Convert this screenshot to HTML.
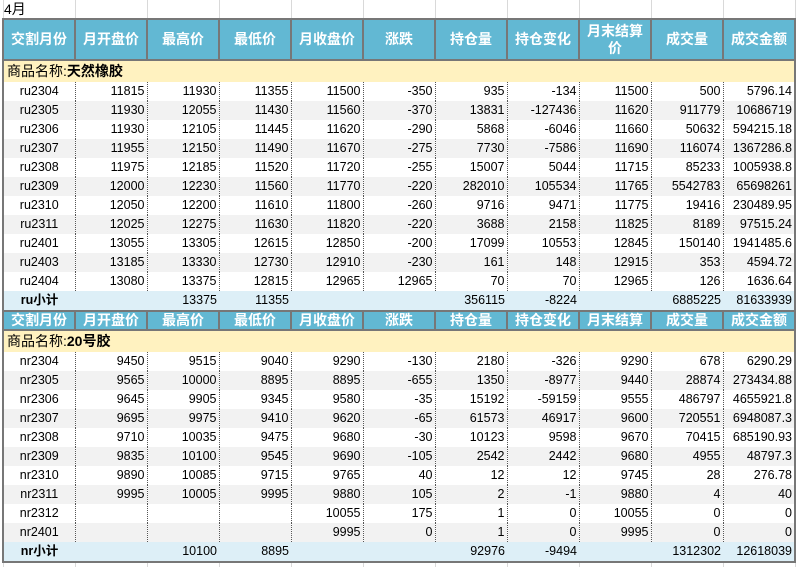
<!DOCTYPE html>
<html><head><meta charset="utf-8"><style>
body{margin:0;width:798px;height:567px;background:#fff;font-family:"Liberation Sans","Noto Sans CJK SC",sans-serif;position:relative;overflow:hidden}
.grid{position:absolute;top:0;left:0;width:798px;height:567px;background-image:linear-gradient(to right,#d9d9d9 1px,transparent 1px);background-size:72px 100%;background-position:3px 0}
.t4{position:absolute;left:4px;top:0;font-size:14px;line-height:18px}
table{position:absolute;left:2px;top:18px;width:794px;border-collapse:collapse;table-layout:fixed;border:2px solid #777;font-size:12.5px;background:#fff}
td{padding:0 2px;border-right:1px dotted #555;white-space:nowrap;overflow:hidden;text-align:right;height:19px;line-height:19px}
tr.d td:first-child{text-align:center}
tr.d:nth-child(even) td{background:#f2f2f2}
th{background:#62b8d3;color:#fff;font-weight:bold;font-size:14px;border:2px solid #777;line-height:17px;padding:0}
tr.h1 th{height:39px}
tr.h2 th{height:17px}
tr.n td{background:#fff2c0;text-align:left;font-size:14px;height:21px;border-right:none;padding-left:3px}
tr.s td{background:#ddeff7;height:19px;border-right:none}
tr.s td:first-child{text-align:center;font-weight:bold}
</style></head><body>
<div class="grid"></div>
<div class="t4">4月</div>
<table>
<colgroup><col span="11" style="width:72px"></colgroup>
<tr class="h1"><th>交割月份</th><th>月开盘价</th><th>最高价</th><th>最低价</th><th>月收盘价</th><th>涨跌</th><th>持仓量</th><th>持仓变化</th><th>月末结算<br>价</th><th>成交量</th><th>成交金额</th></tr>
<tr class="n"><td colspan="11">商品名称:<b>天然橡胶</b></td></tr>
<tr class="d"><td>ru2304</td><td>11815</td><td>11930</td><td>11355</td><td>11500</td><td>-350</td><td>935</td><td>-134</td><td>11500</td><td>500</td><td>5796.14</td></tr>
<tr class="d"><td>ru2305</td><td>11930</td><td>12055</td><td>11430</td><td>11560</td><td>-370</td><td>13831</td><td>-127436</td><td>11620</td><td>911779</td><td>10686719</td></tr>
<tr class="d"><td>ru2306</td><td>11930</td><td>12105</td><td>11445</td><td>11620</td><td>-290</td><td>5868</td><td>-6046</td><td>11660</td><td>50632</td><td>594215.18</td></tr>
<tr class="d"><td>ru2307</td><td>11955</td><td>12150</td><td>11490</td><td>11670</td><td>-275</td><td>7730</td><td>-7586</td><td>11690</td><td>116074</td><td>1367286.8</td></tr>
<tr class="d"><td>ru2308</td><td>11975</td><td>12185</td><td>11520</td><td>11720</td><td>-255</td><td>15007</td><td>5044</td><td>11715</td><td>85233</td><td>1005938.8</td></tr>
<tr class="d"><td>ru2309</td><td>12000</td><td>12230</td><td>11560</td><td>11770</td><td>-220</td><td>282010</td><td>105534</td><td>11765</td><td>5542783</td><td>65698261</td></tr>
<tr class="d"><td>ru2310</td><td>12050</td><td>12200</td><td>11610</td><td>11800</td><td>-260</td><td>9716</td><td>9471</td><td>11775</td><td>19416</td><td>230489.95</td></tr>
<tr class="d"><td>ru2311</td><td>12025</td><td>12275</td><td>11630</td><td>11820</td><td>-220</td><td>3688</td><td>2158</td><td>11825</td><td>8189</td><td>97515.24</td></tr>
<tr class="d"><td>ru2401</td><td>13055</td><td>13305</td><td>12615</td><td>12850</td><td>-200</td><td>17099</td><td>10553</td><td>12845</td><td>150140</td><td>1941485.6</td></tr>
<tr class="d"><td>ru2403</td><td>13185</td><td>13330</td><td>12730</td><td>12910</td><td>-230</td><td>161</td><td>148</td><td>12915</td><td>353</td><td>4594.72</td></tr>
<tr class="d"><td>ru2404</td><td>13080</td><td>13375</td><td>12815</td><td>12965</td><td>12965</td><td>70</td><td>70</td><td>12965</td><td>126</td><td>1636.64</td></tr>
<tr class="s"><td>ru小计</td><td></td><td>13375</td><td>11355</td><td></td><td></td><td>356115</td><td>-8224</td><td></td><td>6885225</td><td>81633939</td></tr>
<tr class="h2"><th>交割月份</th><th>月开盘价</th><th>最高价</th><th>最低价</th><th>月收盘价</th><th>涨跌</th><th>持仓量</th><th>持仓变化</th><th>月末结算</th><th>成交量</th><th>成交金额</th></tr>
<tr class="n"><td colspan="11">商品名称:<b>20号胶</b></td></tr>
<tr class="d"><td>nr2304</td><td>9450</td><td>9515</td><td>9040</td><td>9290</td><td>-130</td><td>2180</td><td>-326</td><td>9290</td><td>678</td><td>6290.29</td></tr>
<tr class="d"><td>nr2305</td><td>9565</td><td>10000</td><td>8895</td><td>8895</td><td>-655</td><td>1350</td><td>-8977</td><td>9440</td><td>28874</td><td>273434.88</td></tr>
<tr class="d"><td>nr2306</td><td>9645</td><td>9905</td><td>9345</td><td>9580</td><td>-35</td><td>15192</td><td>-59159</td><td>9555</td><td>486797</td><td>4655921.8</td></tr>
<tr class="d"><td>nr2307</td><td>9695</td><td>9975</td><td>9410</td><td>9620</td><td>-65</td><td>61573</td><td>46917</td><td>9600</td><td>720551</td><td>6948087.3</td></tr>
<tr class="d"><td>nr2308</td><td>9710</td><td>10035</td><td>9475</td><td>9680</td><td>-30</td><td>10123</td><td>9598</td><td>9670</td><td>70415</td><td>685190.93</td></tr>
<tr class="d"><td>nr2309</td><td>9835</td><td>10100</td><td>9545</td><td>9690</td><td>-105</td><td>2542</td><td>2442</td><td>9680</td><td>4955</td><td>48797.3</td></tr>
<tr class="d"><td>nr2310</td><td>9890</td><td>10085</td><td>9715</td><td>9765</td><td>40</td><td>12</td><td>12</td><td>9745</td><td>28</td><td>276.78</td></tr>
<tr class="d"><td>nr2311</td><td>9995</td><td>10005</td><td>9995</td><td>9880</td><td>105</td><td>2</td><td>-1</td><td>9880</td><td>4</td><td>40</td></tr>
<tr class="d"><td>nr2312</td><td></td><td></td><td></td><td>10055</td><td>175</td><td>1</td><td>0</td><td>10055</td><td>0</td><td>0</td></tr>
<tr class="d"><td>nr2401</td><td></td><td></td><td></td><td>9995</td><td>0</td><td>1</td><td>0</td><td>9995</td><td>0</td><td>0</td></tr>
<tr class="s"><td>nr小计</td><td></td><td>10100</td><td>8895</td><td></td><td></td><td>92976</td><td>-9494</td><td></td><td>1312302</td><td>12618039</td></tr>
</table>
</body></html>
